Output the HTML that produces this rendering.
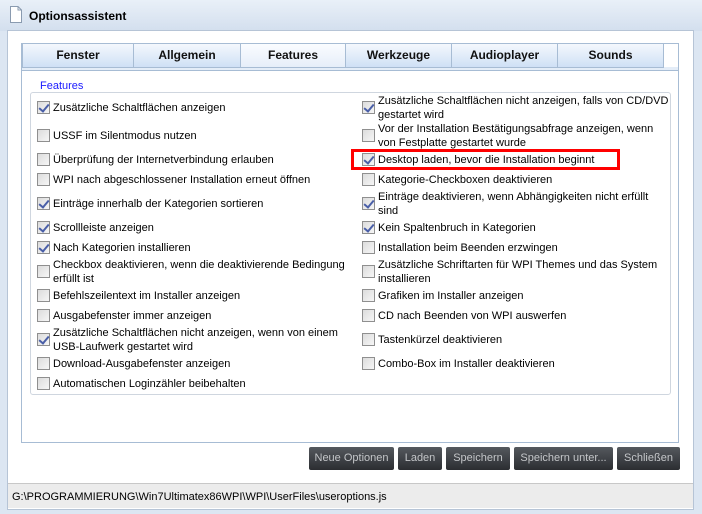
<!DOCTYPE html>
<html><head><meta charset="utf-8"><style>
*{margin:0;padding:0;box-sizing:border-box}
body{width:702px;height:514px;overflow:hidden;background:#dce6f2;font-family:"Liberation Sans",Arial,sans-serif;font-size:11px;color:#000;position:relative}
.abs{position:absolute}
#title{left:0;top:0;width:702px;height:31px;background:linear-gradient(#e9f0f8,#d3dfee);}
#title span{position:absolute;left:29px;top:9px;font-weight:bold;font-size:12px}
#frame{left:7px;top:30px;width:687px;height:480px;border:1px solid #b6c4d6;background:#fff}
#tabpanel{left:21px;top:43px;width:658px;height:400px;border:1px solid #a7bcd4;background:#fff}
.tab{position:absolute;top:44px;height:24px;background:linear-gradient(#f4f8fd,#cfe0f5);border:1px solid #a7bcd4;border-top:none;font-weight:bold;font-size:12px;text-align:center;line-height:22px;color:#111}
.tab.sel{background:linear-gradient(#fafcff,#e6eef9)}
#strip{left:22px;top:67px;width:656px;height:4px;border-bottom:1px solid #a7bcd4;background:#e4edf8}
#group{left:30px;top:92px;width:641px;height:303px;border:1px solid #cfd6df;border-radius:3px}
#legend{left:38px;top:80px;background:#fff;color:#1a1aff;padding:0 2px;font-size:11px}
.cb{position:absolute;width:13px;height:13px;border:1px solid #8f8f8f;background:linear-gradient(135deg,#dcdcdc,#f6f6f6)}
.cb.c::after{content:"";position:absolute;left:3px;top:0px;width:4px;height:8px;border:solid #4a5fa8;border-width:0 2px 2px 0;transform:rotate(40deg)}
.t{position:absolute;line-height:13.5px;white-space:nowrap;margin-top:1px}
.btn{position:absolute;top:447px;height:23px;border-radius:2px;background:linear-gradient(#55595e,#2b2d31);color:#c4c6c9;font-size:11px;text-align:center;line-height:23px}
#status{left:8px;top:483px;width:685px;height:25px;background:#ececec;border-top:1px solid #c8c8c8;padding:7px 0 0 4px;font-size:11px}
#red{left:351px;top:149px;width:269px;height:21px;border:3px solid #f00}
</style></head><body>
<div id="title" class="abs">
<svg class="abs" style="left:9px;top:6px" width="14" height="17"><path d="M1.5 .5H9L12.5 4V16.5H1.5Z" fill="#fff" stroke="#8a9bb0"/><path d="M9 .5V4H12.5" fill="none" stroke="#8a9bb0"/></svg>
<span>Optionsassistent</span></div>
<div id="frame" class="abs"></div>
<div id="tabpanel" class="abs"></div>
<div id="strip" class="abs"></div>
<div class="tab" style="left:22px;width:112px">Fenster</div>
<div class="tab" style="left:133px;width:108px">Allgemein</div>
<div class="tab sel" style="left:240px;width:106px">Features</div>
<div class="tab" style="left:345px;width:107px">Werkzeuge</div>
<div class="tab" style="left:451px;width:107px">Audioplayer</div>
<div class="tab" style="left:557px;width:107px">Sounds</div>
<div id="group" class="abs"></div>
<div id="legend" class="abs">Features</div>

<div class="cb c" style="left:37px;top:101px"></div><div class="t" style="left:53px;top:101px">Zusätzliche Schaltflächen anzeigen</div>
<div class="cb" style="left:37px;top:129px"></div><div class="t" style="left:53px;top:129px">USSF im Silentmodus nutzen</div>
<div class="cb" style="left:37px;top:153px"></div><div class="t" style="left:53px;top:153px">Überprüfung der Internetverbindung erlauben</div>
<div class="cb" style="left:37px;top:173px"></div><div class="t" style="left:53px;top:173px">WPI nach abgeschlossener Installation erneut öffnen</div>
<div class="cb c" style="left:37px;top:197px"></div><div class="t" style="left:53px;top:197px">Einträge innerhalb der Kategorien sortieren</div>
<div class="cb c" style="left:37px;top:221px"></div><div class="t" style="left:53px;top:221px">Scrollleiste anzeigen</div>
<div class="cb c" style="left:37px;top:241px"></div><div class="t" style="left:53px;top:241px">Nach Kategorien installieren</div>
<div class="cb" style="left:37px;top:265px"></div><div class="t" style="left:53px;top:258px">Checkbox deaktivieren, wenn die deaktivierende Bedingung<br>erfüllt ist</div>
<div class="cb" style="left:37px;top:289px"></div><div class="t" style="left:53px;top:289px">Befehlszeilentext im Installer anzeigen</div>
<div class="cb" style="left:37px;top:309px"></div><div class="t" style="left:53px;top:309px">Ausgabefenster immer anzeigen</div>
<div class="cb c" style="left:37px;top:333px"></div><div class="t" style="left:53px;top:326px">Zusätzliche Schaltflächen nicht anzeigen, wenn von einem<br>USB-Laufwerk gestartet wird</div>
<div class="cb" style="left:37px;top:357px"></div><div class="t" style="left:53px;top:357px">Download-Ausgabefenster anzeigen</div>
<div class="cb" style="left:37px;top:377px"></div><div class="t" style="left:53px;top:377px">Automatischen Loginzähler beibehalten</div>

<div class="cb c" style="left:362px;top:101px"></div><div class="t" style="left:378px;top:94px">Zusätzliche Schaltflächen nicht anzeigen, falls von CD/DVD<br>gestartet wird</div>
<div class="cb" style="left:362px;top:129px"></div><div class="t" style="left:378px;top:122px">Vor der Installation Bestätigungsabfrage anzeigen, wenn<br>von Festplatte gestartet wurde</div>
<div class="cb c" style="left:362px;top:153px"></div><div class="t" style="left:378px;top:153px">Desktop laden, bevor die Installation beginnt</div>
<div class="cb" style="left:362px;top:173px"></div><div class="t" style="left:378px;top:173px">Kategorie-Checkboxen deaktivieren</div>
<div class="cb c" style="left:362px;top:197px"></div><div class="t" style="left:378px;top:190px">Einträge deaktivieren, wenn Abhängigkeiten nicht erfüllt<br>sind</div>
<div class="cb c" style="left:362px;top:221px"></div><div class="t" style="left:378px;top:221px">Kein Spaltenbruch in Kategorien</div>
<div class="cb" style="left:362px;top:241px"></div><div class="t" style="left:378px;top:241px">Installation beim Beenden erzwingen</div>
<div class="cb" style="left:362px;top:265px"></div><div class="t" style="left:378px;top:258px">Zusätzliche Schriftarten für WPI Themes und das System<br>installieren</div>
<div class="cb" style="left:362px;top:289px"></div><div class="t" style="left:378px;top:289px">Grafiken im Installer anzeigen</div>
<div class="cb" style="left:362px;top:309px"></div><div class="t" style="left:378px;top:309px">CD nach Beenden von WPI auswerfen</div>
<div class="cb" style="left:362px;top:333px"></div><div class="t" style="left:378px;top:333px">Tastenkürzel deaktivieren</div>
<div class="cb" style="left:362px;top:357px"></div><div class="t" style="left:378px;top:357px">Combo-Box im Installer deaktivieren</div>
<div id="red" class="abs"></div>

<div class="btn" style="left:309px;width:85px">Neue Optionen</div>
<div class="btn" style="left:398px;width:44px">Laden</div>
<div class="btn" style="left:446px;width:64px">Speichern</div>
<div class="btn" style="left:514px;width:99px">Speichern unter...</div>
<div class="btn" style="left:617px;width:63px">Schließen</div>
<div id="status" class="abs">G:\PROGRAMMIERUNG\Win7Ultimatex86WPI\WPI\UserFiles\useroptions.js</div>
</body></html>
